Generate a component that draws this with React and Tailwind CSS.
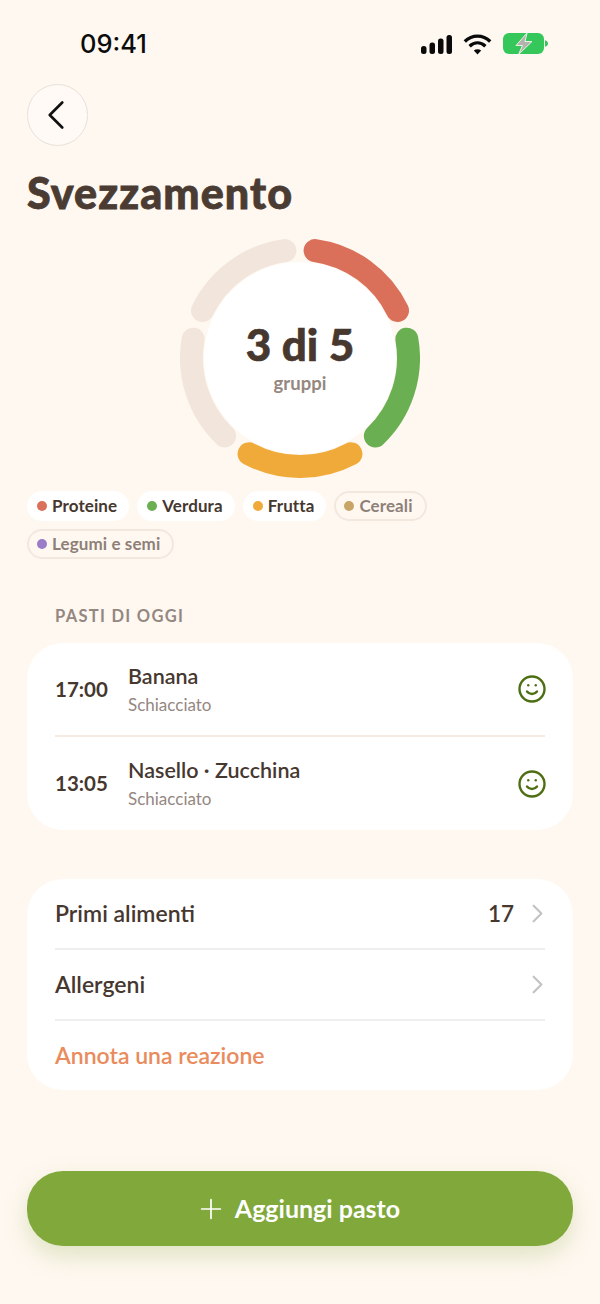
import React from "react";
import { ChevronLeft, ChevronRight, Plus, Smile } from "lucide-react";

const BODY = { fontFamily: '"Lato", "Noto Sans", sans-serif' };

// Five food groups laid out around the ring, 72 degrees apart.
const SEGMENTS = [
  { mid: 36, color: "#da7059" },
  { mid: 108, color: "#6ab052" },
  { mid: 180, color: "#f0aa3a" },
  { mid: 252, color: "#f2e6dc" },
  { mid: 324, color: "#f2e6dc" },
];

function arcPath(midDeg, cx, cy, r) {
  const half = 28;
  const toXY = (deg) => {
    const a = (deg * Math.PI) / 180;
    return [cx + r * Math.sin(a), cy - r * Math.cos(a)];
  };
  const [x1, y1] = toXY(midDeg - half);
  const [x2, y2] = toXY(midDeg + half);
  return `M${x1.toFixed(2)} ${y1.toFixed(2)}A${r} ${r} 0 0 1 ${x2.toFixed(2)} ${y2.toFixed(2)}`;
}

function StatusBar() {
  return (
    <div className="flex h-[84px] items-start justify-between pt-[28px] pl-[80px] pr-[52px]">
      <span className="text-[25.500px] leading-[32px] font-medium text-[#0c0c0c]" style={{ fontFamily: '"Inter", sans-serif' }}>
        09:41
      </span>
      <div className="flex items-start pt-[5px]">
        <svg width="31" height="19" viewBox="0 0 31 19" fill="#0a0a0a" className="mt-[2px]">
          <rect x="0" y="11" width="5.5" height="8" rx="2.5" />
          <rect x="8.5" y="7.5" width="5.5" height="11.5" rx="2.5" />
          <rect x="17" y="3.500" width="5.5" height="15.500" rx="2.5" />
          <rect x="25.5" y="0" width="5.5" height="19" rx="2.5" />
        </svg>
        <svg width="29" height="21" viewBox="0 0 29 21" fill="none" stroke="#0a0a0a" className="ml-[11px] mt-[1px]">
          <path d="M1.8 7.4C9.2 0.4 19.8 0.4 27.2 7.4" strokeWidth="3.4" />
          <path d="M6.6 12.2C11.4 7.8 17.6 7.8 22.4 12.2" strokeWidth="3.4" />
          <path d="M14.5 20.6 10.8 16.6C13 14.8 16 14.8 18.2 16.6Z" fill="#0a0a0a" stroke="none" />
        </svg>
        <svg width="45" height="21" viewBox="0 0 45 21" className="ml-[11px]">
          <rect x="0" y="0" width="41" height="21" rx="6" fill="#35c759" />
          <path d="M42 7.200c2 .4 3 1.700 3 3.300s-1 2.900-3 3.300z" fill="#35c759" />
          <path d="M24 0 13 12.500H19.500L15.500 21.500 29 8.500H22Z" fill="#b4b4ae" stroke="#e9f5e4" strokeWidth="1" />
        </svg>
      </div>
    </div>
  );
}

function Ring() {
  return (
    <div className="relative mx-auto h-[240px] w-[240px]">
      <svg width="240" height="240" viewBox="0 0 240 240" fill="none">
        {SEGMENTS.map((s) => (
          <path key={s.mid} d={arcPath(s.mid, 120, 120, 108.500)} stroke={s.color} strokeWidth="23" strokeLinecap="round" />
        ))}
      </svg>
      <div className="absolute inset-[24px] flex flex-col items-center rounded-full bg-[radial-gradient(circle,#ffffff_88%,#fff9f3_100%)]">
        <span className="mt-[56px] text-[44px] leading-[52px] font-black text-[#46372f] [-webkit-text-stroke:0.6px_#46372f]">3 di 5</span>
        <span className="mt-[2px] text-[18.500px] leading-[22px] font-bold text-[#958880]">gruppi</span>
      </div>
    </div>
  );
}

function Chip({ color, label, active }) {
  return (
    <div className={`flex h-[30px] items-center gap-[5px] rounded-full pr-[12px] ${active ? "bg-white pl-[10px]" : "border-2 border-[#f3e8de] pl-[8px]"}`}>
      <span className="h-[10px] w-[10px] rounded-full" style={{ backgroundColor: color }} />
      <span className={`text-[17px] font-bold tracking-[0.1px] ${active ? "text-[#46372f]" : "text-[#8e8078]"}`}>{label}</span>
    </div>
  );
}

function MealRow({ time, name, note, height }) {
  return (
    <div className={`flex items-center ${height}`}>
      <span className="w-[73px] text-[20.500px] font-bold text-[#46372f]">{time}</span>
      <div className="flex flex-1 flex-col gap-[5px]">
        <span className="text-[21.500px] leading-[26px] font-semibold text-[#46372f]">{name}</span>
        <span className="text-[17px] leading-[22px] text-[#948781]">{note}</span>
      </div>
      <Smile size={30} strokeWidth={1.900} className="-mr-[2px] text-[#4d6e12]" />
    </div>
  );
}

function LinkRow({ children, value }) {
  return (
    <div className="flex h-[69px] items-center justify-between">
      <span className="text-[23px] font-semibold text-[#46372f]">{children}</span>
      <div className="-mr-[8px] flex items-center gap-[8px]">
        {value && <span className="text-[22.500px] font-semibold text-[#46372f]">{value}</span>}
        <ChevronRight size={31} strokeWidth={1.700} className="text-[#c3c3c3]" />
      </div>
    </div>
  );
}

export default function App() {
  return (
    <div className="h-[1304px] w-[600px] overflow-hidden bg-[#fff8f1]" style={BODY}>
      <StatusBar />
      <div className="px-[27px]">
        <button className="flex h-[62px] w-[61px] items-center justify-center rounded-full border border-[#e8e0d9] bg-[#fffaf6]">
          <ChevronLeft size={50} strokeWidth={1.300} className="-ml-[4px] shrink-0 text-[#111]" />
        </button>
        <h1 className="mt-[22px] text-[43px] leading-[50px] font-black tracking-[1.100px] text-[#4a3b33] [-webkit-text-stroke:0.8px_#4a3b33]">Svezzamento</h1>
        <div className="mt-[20px]">
          <Ring />
        </div>
        <div className="mt-[13px] flex w-[500px] flex-wrap gap-x-[8px] gap-y-[8px]">
          <Chip color="#da7059" label="Proteine" active />
          <Chip color="#6ab052" label="Verdura" active />
          <Chip color="#f0aa3a" label="Frutta" active />
          <Chip color="#c9a468" label="Cereali" />
          <Chip color="#9b7cc9" label="Legumi e semi" />
        </div>
        <p className="mt-[46px] pl-[28px] text-[16.500px] leading-[22px] font-bold tracking-[1.300px] text-[#948781]">PASTI DI OGGI</p>
        <section className="mt-[16px] rounded-[36px] bg-white px-[28px]">
          <MealRow time="17:00" name="Banana" note="Schiacciato" height="h-[92px]" />
          <div className="h-[2px] bg-[#f5ebe3]" />
          <MealRow time="13:05" name="Nasello · Zucchina" note="Schiacciato" height="h-[93px]" />
        </section>
        <section className="mt-[49px] rounded-[36px] bg-white px-[28px]">
          <LinkRow value="17">Primi alimenti</LinkRow>
          <div className="h-[2px] bg-[#eeeeee]" />
          <LinkRow>Allergeni</LinkRow>
          <div className="h-[2px] bg-[#eeeeee]" />
          <div className="flex h-[69px] items-center">
            <span className="text-[23px] font-semibold text-[#e98b5c]">Annota una reazione</span>
          </div>
        </section>
        <button className="mt-[81px] flex h-[75px] w-full items-center justify-center gap-[8px] rounded-[36px] bg-[#80a83a] pr-[5px] shadow-[0_10px_24px_rgba(128,168,58,0.25)]">
          <Plus size={32} strokeWidth={1.300} className="text-white" />
          <span className="text-[25px] font-bold text-white">Aggiungi pasto</span>
        </button>
      </div>
    </div>
  );
}
